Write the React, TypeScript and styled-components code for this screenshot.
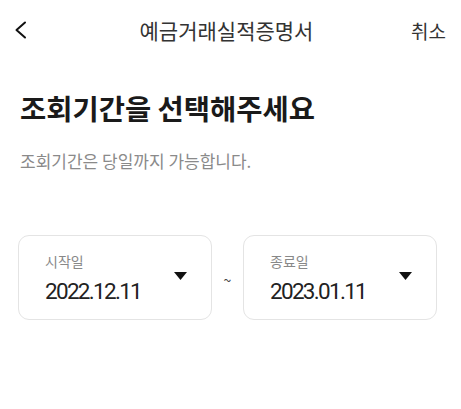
import React from "react";
import styled, { createGlobalStyle } from "styled-components";

const Global = createGlobalStyle`
  html, body { margin: 0; padding: 0; background: #ffffff; }
  body { font-family: "Noto Sans CJK KR", "Noto Sans", sans-serif; color: #1a1a1a; }
  * { box-sizing: border-box; }
`;

const Page = styled.div`
  width: 461px;
  height: 409px;
  background: #fff;
  display: flex;
  flex-direction: column;
`;

const Header = styled.header`
  height: 60px;
  display: grid;
  grid-template-columns: 60px 1fr 60px;
  align-items: center;
`;

const BackButton = styled.button`
  border: 0;
  background: none;
  padding: 0 0 0 12px;
  display: flex;
  align-items: center;
  cursor: pointer;
`;

const HeaderTitle = styled.h1`
  margin: 0;
  font-size: 21px;
  font-weight: 400;
  color: #333;
  text-align: center;
  position: relative;
  left: -4px;
`;

const CancelButton = styled.button`
  border: 0;
  background: none;
  padding: 0 15px 0 0;
  font-family: inherit;
  font-size: 19px;
  color: #333;
  text-align: right;
  cursor: pointer;
`;

const Content = styled.main`
  padding: 28px 20px 0 20px;
  display: flex;
  flex-direction: column;
`;

const Heading = styled.h2`
  margin: 0;
  font-size: 28.5px;
  font-weight: 700;
  color: #1a1a1a;
  line-height: 40px;
`;

const Sub = styled.p`
  margin: 21px 0 0 0;
  font-size: 17px;
  color: #8a8a8a;
  line-height: 24px;
`;

const Range = styled.div`
  margin-top: 62px;
  margin-left: -2px;
  display: grid;
  grid-template-columns: 194px 31px 194px;
  align-items: center;
`;

const DateBox = styled.div`
  height: 85px;
  border: 1px solid #e4e4e4;
  border-radius: 11px;
  padding: 0 24px 0 26px;
  display: flex;
  align-items: center;
  justify-content: space-between;
`;

const DateText = styled.div`
  display: flex;
  flex-direction: column;
  gap: 7px;
  margin-top: 2px;
`;

const Label = styled.span`
  font-size: 14px;
  color: #888;
  line-height: 18px;
`;

const Value = styled.span`
  font-family: "Roboto", "Noto Sans", sans-serif;
  font-size: 22.5px;
  color: #222;
  line-height: 28px;
  letter-spacing: -1.7px;
`;

const Caret = styled.svg`
  width: 13px;
  height: 8px;
  margin-bottom: 4px;
`;

const Tilde = styled.span`
  text-align: center;
  font-size: 14px;
  color: #444;
  margin-top: 4px;
`;

function DateField({ label, value }: { label: string; value: string }) {
  return (
    <DateBox>
      <DateText>
        <Label>{label}</Label>
        <Value>{value}</Value>
      </DateText>
      <Caret viewBox="0 0 13 8">
        <polygon points="0,0 13,0 6.5,8" fill="#111" />
      </Caret>
    </DateBox>
  );
}

export default function App() {
  return (
    <>
      <Global />
      <Page>
        <Header>
          <BackButton aria-label="back">
            <svg width="18" height="18" viewBox="0 0 18 18">
              <polyline
                points="13,1.5 4.5,9 13,16.5"
                fill="none"
                stroke="#111"
                strokeWidth="2"
                strokeLinecap="round"
                strokeLinejoin="round"
              />
            </svg>
          </BackButton>
          <HeaderTitle>예금거래실적증명서</HeaderTitle>
          <CancelButton>취소</CancelButton>
        </Header>
        <Content>
          <Heading>조회기간을 선택해주세요</Heading>
          <Sub>조회기간은 당일까지 가능합니다.</Sub>
          <Range>
            <DateField label="시작일" value="2022.12.11" />
            <Tilde>~</Tilde>
            <DateField label="종료일" value="2023.01.11" />
          </Range>
        </Content>
      </Page>
    </>
  );
}
